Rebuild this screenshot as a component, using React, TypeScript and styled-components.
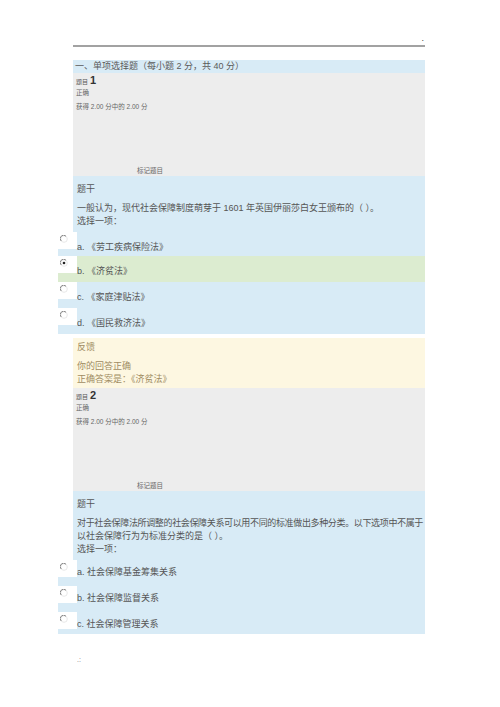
import styled, { createGlobalStyle } from "styled-components";

const GlobalStyle = createGlobalStyle`
  html, body {
    margin: 0;
    padding: 0;
    background: #ffffff;
  }
  body {
    font-family: "Liberation Sans", "Noto Sans CJK SC", sans-serif;
    color: #555555;
  }
`;

const Page = styled.div`
  width: 500px;
  height: 707px;
  box-sizing: border-box;
  padding: 36px 75px 0 58px;
  overflow: hidden;
`;

const TopBar = styled.div`
  margin-left: 15px;
  height: 9px;
  border-bottom: 2px solid #a2a2a2;
  display: flex;
  justify-content: flex-end;
  align-items: flex-start;
  font-size: 9px;
  line-height: 5px;
  color: #444;
  padding-right: 1px;
  margin-bottom: 13px;
`;

const SectionTitle = styled.div`
  margin-left: 15px;
  height: 13px;
  line-height: 13px;
  padding-left: 2px;
  background: #d8ebf6;
  font-size: 9px;
  color: #5a5a5a;
  white-space: nowrap;
`;

const Info = styled.div`
  margin-left: 15px;
  height: 103px;
  box-sizing: border-box;
  padding: 1px 3px 0;
  background: #ededed;
  display: flex;
  flex-direction: column;
`;

const QNo = styled.div`
  line-height: 12px;
  font-size: 6px;
  color: #555;

  b {
    font-size: 11px;
    color: #333;
    margin-left: 2px;
  }
`;

const Small = styled.div<{ $gap?: number }>`
  line-height: 10px;
  font-size: 6.5px;
  color: #666;
  margin-top: ${(p) => p.$gap ?? 0}px;
  white-space: nowrap;
`;

const Flag = styled.div`
  margin-top: auto;
  padding-left: 61px;
  line-height: 10px;
  font-size: 6.5px;
  color: #666;
`;

const QText = styled.div`
  margin-left: 15px;
  padding: 7px 0 4px 4px;
  background: #d8ebf6;
  font-size: 9px;
  color: #555;
`;

const Caption = styled.div`
  line-height: 12px;
  margin-bottom: 7px;
`;

const Line = styled.div<{ $tight?: boolean }>`
  line-height: 13px;
  white-space: nowrap;
  letter-spacing: ${(p) => (p.$tight ? "-0.35px" : "0")};
`;

const Row = styled.div<{ $h: number; $green?: boolean; $off: number }>`
  height: ${(p) => p.$h}px;
  display: flex;
  align-items: flex-start;
  background: ${(p) => (p.$green ? "#dcecd0" : "#d8ebf6")};
  font-size: 9px;
  color: #555;

  span {
    padding-top: ${(p) => p.$off}px;
    line-height: 13px;
    white-space: nowrap;
  }
`;

const RadioBox = styled.div`
  width: 19px;
  height: 17px;
  background: #ffffff;
  display: flex;
  align-items: flex-start;
  padding: 3px 0 0 2px;
  box-sizing: border-box;
  flex-shrink: 0;
`;

const Feedback = styled.div`
  margin: 4px 0 0 15px;
  height: 50px;
  box-sizing: border-box;
  padding: 3px 0 0 4px;
  background: #fdf7e1;
  font-size: 9px;
  color: #a08c62;
`;

const Footer = styled.div`
  margin: 22px 0 0 19px;
  font-size: 7px;
  color: #777;
`;

const Radio = ({ checked }: { checked?: boolean }) => (
  <svg width="8" height="8" viewBox="0 0 8 8">
    <circle cx="4" cy="4" r="3.3" fill="#fff" stroke="#e2e2e2" strokeWidth="0.8" />
    <path d="M1.2 6 A3.3 3.3 0 0 1 6 1.2" fill="none" stroke="#7a7a7a" strokeWidth="0.9" />
    {checked && <circle cx="4" cy="4" r="1.3" fill="#222" />}
  </svg>
);

type Opt = { label: string; h: number; checked?: boolean; green?: boolean };

const q1Options: Opt[] = [
  { label: "a. 《劳工疾病保险法》", h: 24 },
  { label: "b. 《济贫法》", h: 26, checked: true, green: true },
  { label: "c. 《家庭津贴法》", h: 26 },
  { label: "d. 《国民救济法》", h: 26 },
];

const q2Options: Opt[] = [
  { label: "a. 社会保障基金筹集关系", h: 26 },
  { label: "b. 社会保障监督关系", h: 26 },
  { label: "c. 社会保障管理关系", h: 22 },
];

const InfoBlock = ({ no }: { no: number }) => (
  <Info>
    <QNo>
      题目<b>{no}</b>
    </QNo>
    <Small>正确</Small>
    <Small $gap={4}>获得 2.00 分中的 2.00 分</Small>
    <Flag>标记题目</Flag>
  </Info>
);

const Options = ({ items, off }: { items: Opt[]; off: number }) => (
  <div>
    {items.map((o) => (
      <Row key={o.label} $h={o.h} $green={o.green} $off={off}>
        <RadioBox>
          <Radio checked={o.checked} />
        </RadioBox>
        <span>{o.label}</span>
      </Row>
    ))}
  </div>
);

export default function App() {
  return (
    <>
      <GlobalStyle />
      <Page>
        <TopBar>.</TopBar>
        <SectionTitle>一、单项选择题（每小题 2 分，共 40 分）</SectionTitle>

        <InfoBlock no={1} />
        <QText>
          <Caption>题干</Caption>
          <Line>一般认为，现代社会保障制度萌芽于 1601 年英国伊丽莎白女王颁布的（ ）。</Line>
          <Line>选择一项：</Line>
        </QText>
        <Options items={q1Options} off={9} />
        <Feedback>
          <Caption>反馈</Caption>
          <Line>你的回答正确</Line>
          <Line>正确答案是：《济贫法》</Line>
        </Feedback>

        <InfoBlock no={2} />
        <QText>
          <Caption>题干</Caption>
          <Line $tight>对于社会保障法所调整的社会保障关系可以用不同的标准做出多种分类。以下选项中不属于</Line>
          <Line>以社会保障行为为标准分类的是（ ）。</Line>
          <Line>选择一项：</Line>
        </QText>
        <Options items={q2Options} off={6} />

        <Footer>.:</Footer>
      </Page>
    </>
  );
}
